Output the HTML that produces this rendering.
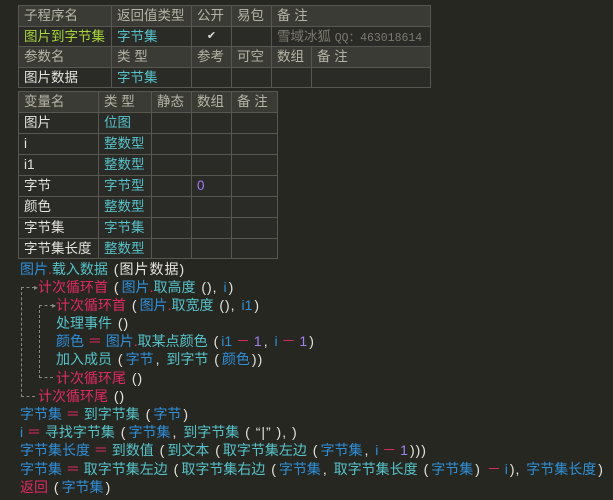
<!DOCTYPE html>
<html><head><meta charset="utf-8"><style>
*{margin:0;padding:0;box-sizing:border-box}
body{width:613px;height:500px;background:#272722;overflow:hidden;position:relative;font-family:"Liberation Sans","Noto Sans CJK SC",sans-serif;font-size:13.5px;color:#e4e4dc}
.c{position:absolute;border:1px solid #57574f;padding-left:5px;line-height:19px;white-space:nowrap;overflow:hidden}
.h{background:#3b3b35;color:#b4b4a6}
.d{background:#2a2a26}
.g{color:#a8d63a}.cy{color:#56c3c9}.b{color:#2f8fd8}.r{color:#e02a62}.p{color:#a07ff0}.w{color:#e4e4dc}.gr{color:#7a7a70}
.l{position:absolute;white-space:nowrap;line-height:18px;font-size:14px}
.l .w{padding:0 2px;letter-spacing:1px}
.dash{position:absolute;border-color:#8a8a80;border-style:dashed;border-width:0}
</style></head><body>
<div class="c h" style="left:18px;top:5px;width:94px;height:22px">子程序名</div>
<div class="c h" style="left:111px;top:5px;width:81px;height:22px">返回值类型</div>
<div class="c h" style="left:191px;top:5px;width:41px;height:22px">公开</div>
<div class="c h" style="left:231px;top:5px;width:41px;height:22px">易包</div>
<div class="c h" style="left:271px;top:5px;width:160px;height:22px">备 注</div>
<div class="c d g" style="left:18px;top:26px;width:94px;height:21px">图片到字节集</div>
<div class="c d cy" style="left:111px;top:26px;width:81px;height:21px">字节集</div>
<div class="c d" style="left:191px;top:26px;width:41px;height:21px;text-align:center;padding:0;color:#ddd;font-size:11px">✔</div>
<div class="c d" style="left:231px;top:26px;width:41px;height:21px"></div>
<div class="c d gr" style="left:271px;top:26px;width:160px;height:21px">雪域冰狐 <span style="font-family:'Liberation Mono',monospace;font-size:11.5px">QQ：463018614</span></div>
<div class="c h" style="left:18px;top:46px;width:94px;height:22px">参数名</div>
<div class="c h" style="left:111px;top:46px;width:81px;height:22px">类 型</div>
<div class="c h" style="left:191px;top:46px;width:41px;height:22px">参考</div>
<div class="c h" style="left:231px;top:46px;width:41px;height:22px">可空</div>
<div class="c h" style="left:271px;top:46px;width:41px;height:22px">数组</div>
<div class="c h" style="left:311px;top:46px;width:120px;height:22px">备 注</div>
<div class="c d w" style="left:18px;top:67px;width:94px;height:21px">图片数据</div>
<div class="c d cy" style="left:111px;top:67px;width:81px;height:21px">字节集</div>
<div class="c d" style="left:191px;top:67px;width:41px;height:21px"></div>
<div class="c d" style="left:231px;top:67px;width:41px;height:21px"></div>
<div class="c d" style="left:271px;top:67px;width:41px;height:21px"></div>
<div class="c d" style="left:311px;top:67px;width:120px;height:21px"></div>
<div class="c h" style="left:18px;top:91px;width:81px;height:22px">变量名</div>
<div class="c h" style="left:98px;top:91px;width:54px;height:22px">类 型</div>
<div class="c h" style="left:151px;top:91px;width:41px;height:22px">静态</div>
<div class="c h" style="left:191px;top:91px;width:41px;height:22px">数组</div>
<div class="c h" style="left:231px;top:91px;width:47px;height:22px">备 注</div>
<div class="c d w" style="left:18px;top:112px;width:81px;height:22px">图片</div><div class="c d cy" style="left:98px;top:112px;width:54px;height:22px">位图</div><div class="c d" style="left:151px;top:112px;width:41px;height:22px"></div><div class="c d" style="left:191px;top:112px;width:41px;height:22px"></div><div class="c d" style="left:231px;top:112px;width:47px;height:22px"></div>
<div class="c d w" style="left:18px;top:133px;width:81px;height:22px">i</div><div class="c d cy" style="left:98px;top:133px;width:54px;height:22px">整数型</div><div class="c d" style="left:151px;top:133px;width:41px;height:22px"></div><div class="c d" style="left:191px;top:133px;width:41px;height:22px"></div><div class="c d" style="left:231px;top:133px;width:47px;height:22px"></div>
<div class="c d w" style="left:18px;top:154px;width:81px;height:22px">i1</div><div class="c d cy" style="left:98px;top:154px;width:54px;height:22px">整数型</div><div class="c d" style="left:151px;top:154px;width:41px;height:22px"></div><div class="c d" style="left:191px;top:154px;width:41px;height:22px"></div><div class="c d" style="left:231px;top:154px;width:47px;height:22px"></div>
<div class="c d w" style="left:18px;top:175px;width:81px;height:22px">字节</div><div class="c d cy" style="left:98px;top:175px;width:54px;height:22px">字节型</div><div class="c d" style="left:151px;top:175px;width:41px;height:22px"></div><div class="c d p" style="left:191px;top:175px;width:41px;height:22px">0</div><div class="c d" style="left:231px;top:175px;width:47px;height:22px"></div>
<div class="c d w" style="left:18px;top:196px;width:81px;height:22px">颜色</div><div class="c d cy" style="left:98px;top:196px;width:54px;height:22px">整数型</div><div class="c d" style="left:151px;top:196px;width:41px;height:22px"></div><div class="c d" style="left:191px;top:196px;width:41px;height:22px"></div><div class="c d" style="left:231px;top:196px;width:47px;height:22px"></div>
<div class="c d w" style="left:18px;top:217px;width:81px;height:22px">字节集</div><div class="c d cy" style="left:98px;top:217px;width:54px;height:22px">字节集</div><div class="c d" style="left:151px;top:217px;width:41px;height:22px"></div><div class="c d" style="left:191px;top:217px;width:41px;height:22px"></div><div class="c d" style="left:231px;top:217px;width:47px;height:22px"></div>
<div class="c d w" style="left:18px;top:238px;width:81px;height:21px">字节集长度</div><div class="c d cy" style="left:98px;top:238px;width:54px;height:21px">整数型</div><div class="c d" style="left:151px;top:238px;width:41px;height:21px"></div><div class="c d" style="left:191px;top:238px;width:41px;height:21px"></div><div class="c d" style="left:231px;top:238px;width:47px;height:21px"></div>
<div class="dash" style="left:21px;top:287px;width:14px;height:110px;border-left-width:1px;border-top-width:1px;border-bottom-width:1px"></div>
<div class="dash" style="left:39px;top:305px;width:14px;height:73px;border-left-width:1px;border-top-width:1px;border-bottom-width:1px"></div>
<div style="position:absolute;left:34px;top:283px;color:#8a8a80;font-size:8px">▸</div>
<div style="position:absolute;left:52px;top:301px;color:#8a8a80;font-size:8px">▸</div>
<div class="l" style="left:20px;top:260px"><span class="b">图片</span><span class="r">.</span><span class="cy">载入数据</span> <span class="w">(图片数据)</span></div>
<div class="l" style="left:38px;top:278px"><span class="r">计次循环首</span> <span class="w">(</span><span class="b">图片</span><span class="r">.</span><span class="cy">取高度</span> <span class="w">(),</span> <span class="b">i</span><span class="w">)</span></div>
<div class="l" style="left:56px;top:296px"><span class="r">计次循环首</span> <span class="w">(</span><span class="b">图片</span><span class="r">.</span><span class="cy">取宽度</span> <span class="w">(),</span> <span class="b">i1</span><span class="w">)</span></div>
<div class="l cy" style="left:56px;top:314px">处理事件 <span class="w">()</span></div>
<div class="l" style="left:56px;top:332px"><span class="b">颜色</span> <span class="r">＝</span> <span class="b">图片</span><span class="r">.</span><span class="cy">取某点颜色</span> <span class="w">(</span><span class="b">i1</span> <span class="r">－</span> <span class="p">1</span><span class="w">,</span> <span class="b">i</span> <span class="r">－</span> <span class="p">1</span><span class="w">)</span></div>
<div class="l" style="left:56px;top:350px"><span class="cy">加入成员</span> <span class="w">(</span><span class="b">字节</span><span class="w">,</span> <span class="cy">到字节</span> <span class="w">(</span><span class="b">颜色</span><span class="w">))</span></div>
<div class="l" style="left:56px;top:369px"><span class="r">计次循环尾</span> <span class="w">()</span></div>
<div class="l" style="left:38px;top:387px"><span class="r">计次循环尾</span> <span class="w">()</span></div>
<div class="l" style="left:20px;top:405px"><span class="b">字节集</span> <span class="r">＝</span> <span class="cy">到字节集</span> <span class="w">(</span><span class="b">字节</span><span class="w">)</span></div>
<div class="l" style="left:20px;top:423px"><span class="b">i</span> <span class="r">＝</span> <span class="cy">寻找字节集</span> <span class="w">(</span><span class="b">字节集</span><span class="w">,</span> <span class="cy">到字节集</span> <span class="w">( “|” ), )</span></div>
<div class="l" style="left:20px;top:441px"><span class="b">字节集长度</span> <span class="r">＝</span> <span class="cy">到数值</span> <span class="w">(</span><span class="cy">到文本</span> <span class="w">(</span><span class="cy">取字节集左边</span> <span class="w">(</span><span class="b">字节集</span><span class="w">,</span> <span class="b">i</span> <span class="r">－</span> <span class="p">1</span><span class="w">)))</span></div>
<div class="l" style="left:20px;top:460px"><span class="b">字节集</span> <span class="r">＝</span> <span class="cy">取字节集左边</span> <span class="w">(</span><span class="cy">取字节集右边</span> <span class="w">(</span><span class="b">字节集</span><span class="w">,</span> <span class="cy">取字节集长度</span> <span class="w">(</span><span class="b">字节集</span><span class="w">)</span> <span class="r">－</span> <span class="b">i</span><span class="w">),</span> <span class="b">字节集长度</span><span class="w">)</span></div>
<div class="l" style="left:20px;top:478px"><span class="r">返回</span> <span class="w">(</span><span class="b">字节集</span><span class="w">)</span></div>
</body></html>
